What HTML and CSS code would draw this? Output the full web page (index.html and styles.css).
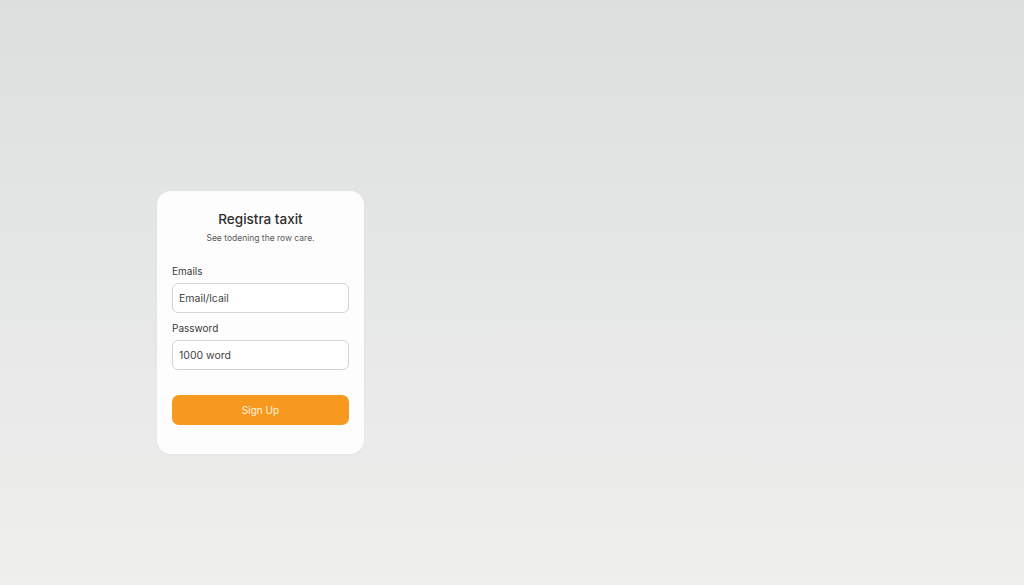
FILE: index.html
```html
<!DOCTYPE html>
<html lang="en">
<head>
    <meta charset="UTF-8">
    <meta name="viewport" content="width=device-width, initial-scale=1.0">
    <title>Registra taxit</title>
    <link rel="stylesheet" href="styles.css">
</head>
<body>
    <main>
        <div class="container">
            <h1>Registra taxit</h1>
            <p class="subtitle">See todening the row care.</p>
            <form id="signup-form">
                <label for="email">Emails</label>
                <input type="text" id="email" value="Email/lcail">
                <label for="password" class="second">Password</label>
                <input type="text" id="password" value="1000 word">
                <button type="submit">Sign Up</button>
            </form>
        </div>
    </main>
</body>
</html>
```

FILE: styles.css
```css
html, body {
    height: 100%;
}
body {
    font-family: Inter, "Noto Sans", Arial, sans-serif;
    margin: 0;
    background: linear-gradient(180deg, #dbdfde 0%, #e6e8e7 50%, #efefed 100%);
}
main {
    padding: 191px 0 0 157px;
}
.container {
    width: 177px;
    background-color: #fdfdfd;
    padding: 20px 15px 29px;
    border-radius: 14px;
    box-shadow: 0 1px 3px rgba(0, 0, 0, 0.04);
}
h1 {
    margin: 0;
    text-align: center;
    font-size: 13.5px;
    line-height: 17px;
    font-weight: 500;
    color: #2e2e2e;
}
.subtitle {
    margin: 4px 0 0;
    text-align: center;
    font-size: 8.5px;
    line-height: 12px;
    color: #5a5a5a;
}
form {
    display: flex;
    flex-direction: column;
    margin-top: 21px;
}
label {
    font-size: 10px;
    line-height: 12px;
    color: #3a3a3a;
    margin-bottom: 6px;
}
label.second {
    margin-top: 9px;
}
input {
    height: 30px;
    box-sizing: border-box;
    margin: 0;
    padding: 0 6px;
    border: 1px solid #d3d3d3;
    border-radius: 6px;
    font-family: inherit;
    font-size: 10.5px;
    color: #444;
    background: #fff;
}
button {
    margin-top: 25px;
    height: 30px;
    background-color: #f7991f;
    color: #fff3e0;
    border: none;
    border-radius: 7px;
    font-family: inherit;
    font-size: 10px;
    cursor: pointer;
}
button:hover {
    background-color: #ef9015;
}
```
